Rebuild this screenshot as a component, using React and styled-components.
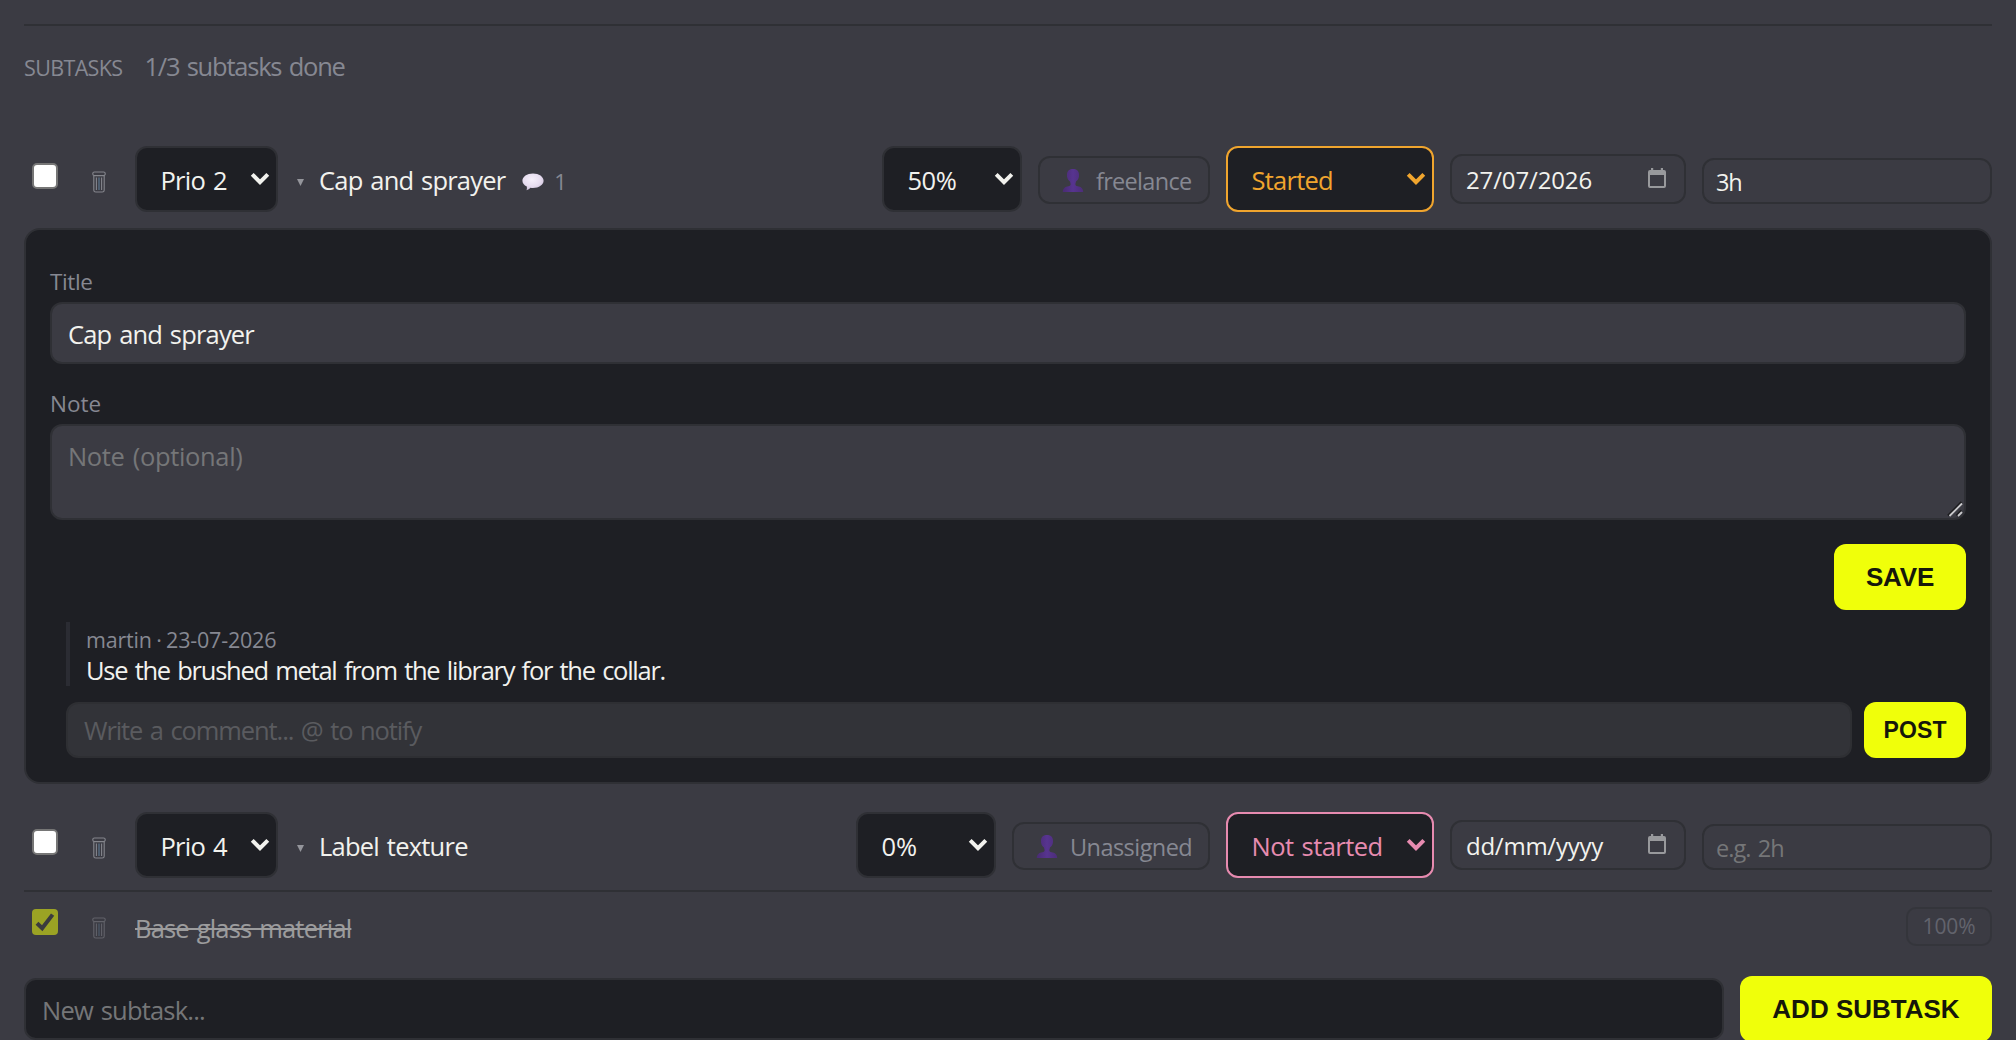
import React from 'react'
import styled, { createGlobalStyle, ThemeProvider } from 'styled-components'

const theme = {
  bg: '#3b3b43',
  dark: '#1e1f24',
  border: '#2f3035',
  text: '#f2f2ee',
  muted: '#868892',
  placeholder: '#757678',
  accent: '#f0ff0a',
  started: '#f0a52e',
  notStarted: '#e78bb0'
}

const GlobalStyle = createGlobalStyle`
  * {
    box-sizing: border-box;
  }

  body {
    margin: 0;
    overflow: hidden;
    background: ${theme.bg};
  }
`

const Page = styled.main`
  height: 1040px;
  padding: 24px 24px 0;
  overflow: hidden;
  background: ${props => props.theme.bg};
  color: ${props => props.theme.text};
  font-family: 'Open Sans', 'Noto Sans', sans-serif;
  font-size: 25.5px;
  line-height: 36px;
  white-space: nowrap;
  word-spacing: 2px;
`

const Header = styled.header`
  display: flex;
  align-items: baseline;
  gap: 22px;
  height: 122px;
  padding-top: 22px;
  border-top: 2px solid ${props => props.theme.border};
  color: ${props => props.theme.muted};
`

const Heading = styled.h2`
  margin: 0;
  font-size: 21.5px;
  font-weight: 400;
  letter-spacing: -0.64px;
`

const Progress = styled.span`
  letter-spacing: -1.22px;
`

const Row = styled.div`
  display: flex;
  align-items: flex-start;
  height: 66px;
`

const Check = styled.span`
  display: flex;
  flex-shrink: 0;
  width: 26px;
  height: 26px;
  margin: 17px 34px 0 8px;
  border: 2px solid #767676;
  border-radius: 5px;
  background: white;

  &.done {
    border: 0;
    border-radius: 4px;
    background: ${props => props.theme.accent};
  }
`

const TrashButton = styled.span`
  display: flex;
  flex-shrink: 0;
  width: 14px;
  height: 22px;
  margin: 25px 29px 0 0;
`

const Select = styled.div`
  display: flex;
  flex-shrink: 0;
  align-items: center;
  justify-content: space-between;
  width: ${props => props.$width}px;
  height: 66px;
  padding: 2px 6px 0 23.5px;
  border: 2px solid ${props => props.$color || props.theme.border};
  border-radius: 12px;
  background: ${props => props.theme.dark};
  color: ${props => props.$color || props.theme.text};
  letter-spacing: ${props => props.$spacing}px;

  svg {
    margin-top: -3px;
  }
`

const Name = styled.div`
  display: flex;
  flex-grow: 1;
  align-items: center;
  height: 66px;
  padding: 2px 0 0 19px;
  letter-spacing: ${props => props.$spacing}px;

  .arrow {
    margin: 5px 15px 0 0;
  }

  .bubble {
    margin: 3px 10px 0 17px;
  }
`

const Count = styled.span`
  padding-top: 1px;
  font-size: 22px;
  color: ${props => props.theme.muted};
`

const Controls = styled.div`
  display: flex;
  gap: 16px;
`

const Assignee = styled.div`
  display: flex;
  align-items: center;
  gap: 12px;
  width: ${props => props.$width}px;
  height: 48px;
  margin-top: 10px;
  padding: 2px 0 0 22px;
  border: 2px solid ${props => props.theme.border};
  border-radius: 12px;
  color: ${props => props.theme.muted};
  font-size: 23.5px;
  letter-spacing: ${props => props.$spacing}px;
`

const DateField = styled.div`
  display: flex;
  align-items: center;
  justify-content: space-between;
  width: 236px;
  height: 50px;
  margin-top: 8px;
  padding: 1px 18px 0 14px;
  border: 2px solid ${props => props.theme.border};
  border-radius: 12px;
  font-size: 24px;
  letter-spacing: ${props => props.$spacing}px;

  svg {
    margin-top: -3px;
  }
`

const Estimate = styled.div`
  display: flex;
  align-items: center;
  width: 290px;
  height: 46px;
  margin-top: 12px;
  padding: 1px 12px 0;
  border: 2px solid ${props => props.theme.border};
  border-radius: 12px;
  color: ${props => props.$empty ? props.theme.placeholder : props.theme.text};
  font-size: 23.5px;
  letter-spacing: ${props => props.$spacing}px;
`

const Panel = styled.section`
  height: 556px;
  margin: 16px 0 28px;
  padding: 37px 24px 0;
  border: 2px solid ${props => props.theme.border};
  border-radius: 16px;
  background: ${props => props.theme.dark};
`

const Label = styled.div`
  height: 35px;
  line-height: 30px;
  font-size: 22.5px;
  color: ${props => props.theme.muted};
  letter-spacing: ${props => props.$spacing}px;
`

const TitleField = styled.div`
  height: 62px;
  margin-bottom: 25px;
  padding: 12px 16px 0;
  border: 2px solid ${props => props.theme.border};
  border-radius: 12px;
  background: ${props => props.theme.bg};
  letter-spacing: -0.83px;
`

const NoteField = styled.div`
  display: flex;
  justify-content: space-between;
  height: 96px;
  margin-bottom: 24px;
  padding: 12px 0 0 16px;
  border: 2px solid ${props => props.theme.border};
  border-radius: 12px;
  background: ${props => props.theme.bg};
  color: ${props => props.theme.placeholder};
  letter-spacing: -0.35px;

  svg {
    align-self: flex-end;
  }
`

const Button = styled.button`
  display: block;
  flex-shrink: 0;
  width: ${props => props.$width}px;
  height: ${props => props.$small ? 56 : 66}px;
  padding: 0;
  border: 0;
  border-radius: 12px;
  background: ${props => props.theme.accent};
  color: #16170a;
  font-family: 'Liberation Sans', Arial, sans-serif;
  font-size: ${props => props.$small ? 23 : 26}px;
  font-weight: bold;
  letter-spacing: ${props => props.$spacing || 0}px;
`

const Actions = styled.div`
  display: flex;
  justify-content: flex-end;
  margin-bottom: 12px;
`

const Comment = styled.div`
  height: 64px;
  margin: 0 0 16px 16px;
  padding: 2px 0 0 16px;
  border-left: 4px solid #2b2c33;
  line-height: 32px;
  letter-spacing: -1.26px;
`

const Meta = styled.div`
  height: 30px;
  font-size: 21.5px;
  color: ${props => props.theme.muted};
  letter-spacing: -0.19px;
  word-spacing: -1px;
`

const CommentForm = styled.div`
  display: flex;
  gap: 12px;
  margin-left: 16px;
`

const CommentField = styled.div`
  flex-grow: 1;
  height: 56px;
  padding: 8px 16px 0;
  border: 2px solid #2e2f33;
  border-radius: 12px;
  background: #323338;
  color: #5a5b5f;
  letter-spacing: -1.1px;
`

const DoneRow = styled.div`
  display: flex;
  align-items: flex-start;
  height: 86px;
  margin-top: 12px;
  border-top: 2px solid ${props => props.theme.border};

  & > * {
    opacity: 0.53;
  }
`

const DoneTitle = styled.span`
  flex-grow: 1;
  padding-top: 18px;
  letter-spacing: -0.81px;

  s {
    text-decoration-thickness: 2px;
  }
`

const Percent = styled.span`
  width: 86px;
  height: 39px;
  margin-top: 15px;
  border: 2px solid ${props => props.theme.border};
  border-radius: 10px;
  color: ${props => props.theme.muted};
  font-size: 21px;
  line-height: 35px;
  text-align: center;
  letter-spacing: -0.14px;
`

const NewSubtask = styled.div`
  display: flex;
  align-items: center;
  gap: 16px;
`

const NewField = styled.div`
  flex-grow: 1;
  height: 62px;
  padding: 12px 16px 0;
  border: 2px solid ${props => props.theme.border};
  border-radius: 12px;
  background: ${props => props.theme.dark};
  color: ${props => props.theme.placeholder};
  letter-spacing: -0.8px;
`

const Chevron = () => (
  <svg width="20" height="14" viewBox="0 0 20 14" fill="none" stroke="currentColor" strokeWidth="4">
    <path d="M2.2 2.4 10 10.2l7.8-7.8" />
  </svg>
)

const Trash = () => (
  <TrashButton>
    <svg width="14" height="22" viewBox="0 0 14 22" fill="none" stroke="#85868d" strokeWidth="1.1">
      <rect x="0.8" y="1" width="12.4" height="3.6" rx="1.6" />
      <path d="M1.8 4.8v14.4q0 1.8 2 1.8h6.4q2 0 2-1.8V4.8" />
      <path d="M4.4 6.5v12.6M9.6 6.5v12.6" />
      <path d="M7 6.5v12.6" stroke="#5f7d96" />
    </svg>
  </TrashButton>
)

const Bubble = () => (
  <svg className="bubble" width="22" height="18" viewBox="0 0 22 18">
    <defs>
      <radialGradient id="bubble" cx="0.45" cy="0.35" r="0.7">
        <stop offset="0" stopColor="#f6f0fb" />
        <stop offset="0.6" stopColor="#e6dcef" />
        <stop offset="1" stopColor="#c9bcd6" />
      </radialGradient>
    </defs>
    <path d="M11 .6c6 0 10.600 3.200 10.600 7.200S17 15 11 15c-.9 0-1.700-.1-2.500-.2-1 1.100-2.300 2-4 2.400.5-1.100.6-2.500.3-3.700C2.100 12.300.4 10.200.4 7.800.4 3.800 5 .6 11 .6z" fill="url(#bubble)" />
  </svg>
)

const Person = () => (
  <svg width="22" height="26" viewBox="0 0 22 26">
    <defs>
      <linearGradient id="person" x1="0" y1="0" x2="1" y2="0">
        <stop offset="0" stopColor="#492b72" />
        <stop offset="0.5" stopColor="#573490" />
        <stop offset="1" stopColor="#4c2d78" />
      </linearGradient>
    </defs>
    <path d="M0.800 24c0-3.800 2.400-5.200 5.600-5.800 1.600-.3 2.200-.8 2.200-2.200L8 13.400C5.400 11.600 4.800 9.200 5 6.200 5.200 2.800 7.600 1 11 1s5.800 1.800 6 5.200c.2 3-.4 5.400-3 7.200l-.6 2.600c0 1.400.6 1.900 2.200 2.200 3.200.6 5.600 2 5.600 5.800z" fill="url(#person)" />
  </svg>
)

const Calendar = () => (
  <svg width="18" height="20" viewBox="0 0 18 20" fill="#98999c">
    <path d="M3 0h2.200v2h7.600V0H15v2h1q2 0 2 2v14q0 2-2 2H2q-2 0-2-2V4q0-2 2-2h1zM2 7v11h14V7z" fillRule="evenodd" />
  </svg>
)

const Grip = () => (
  <svg width="17" height="17" viewBox="0 0 17 17" fill="none">
    <path d="M1 14.500 14.500 1M9.500 14.500l5-5" stroke="#1b1b1e" strokeWidth="2" />
    <path d="M2.500 15 15 2.500M11 15l4-4" stroke="#c9c9cc" strokeWidth="1.800" />
  </svg>
)

const Arrow = () => (
  <svg className="arrow" width="7" height="7" viewBox="0 0 7 7" fill="#94959b">
    <path d="M0 0h7L3.500 7z" />
  </svg>
)

const subtasks = [
  {
    prio: 'Prio 2', title: 'Cap and sprayer', titleSpacing: -0.8, comments: 1,
    percent: '50%', percentSpacing: -0.5,
    assignee: 'freelance', assigneeWidth: 172, assigneeSpacing: -0.7,
    status: 'Started', statusColor: theme.started, statusSpacing: -0.75,
    date: '27/07/2026', dateSpacing: -0.14, estimate: '3h'
  },
  {
    prio: 'Prio 4', title: 'Label texture', titleSpacing: -0.77,
    percent: '0%', percentSpacing: 0,
    assignee: 'Unassigned', assigneeWidth: 198, assigneeSpacing: -0.55,
    status: 'Not started', statusColor: theme.notStarted, statusSpacing: -0.55,
    date: 'dd/mm/yyyy', dateSpacing: -0.25
  }
]

const Subtask = ({ task }) => (
  <Row>
    <Check />
    <Trash />
    <Select $width={143} $spacing={-0.75}>{task.prio}<Chevron /></Select>
    <Name $spacing={task.titleSpacing}>
      <Arrow />
      {task.title}
      {task.comments && <><Bubble /><Count>{task.comments}</Count></>}
    </Name>
    <Controls>
      <Select $width={140} $spacing={task.percentSpacing}>{task.percent}<Chevron /></Select>
      <Assignee $width={task.assigneeWidth} $spacing={task.assigneeSpacing}>
        <Person />
        {task.assignee}
      </Assignee>
      <Select $width={208} $color={task.statusColor} $spacing={task.statusSpacing}>
        {task.status}<Chevron />
      </Select>
      <DateField $spacing={task.dateSpacing}>{task.date}<Calendar /></DateField>
      <Estimate $empty={!task.estimate} $spacing={task.estimate ? -1.2 : -0.95}>
        {task.estimate || 'e.g. 2h'}
      </Estimate>
    </Controls>
  </Row>
)

const App = () => (
  <ThemeProvider theme={theme}>
    <GlobalStyle />
    <Page>
      <Header>
        <Heading>SUBTASKS</Heading>
        <Progress>1/3 subtasks done</Progress>
      </Header>

      <Subtask task={subtasks[0]} />

      <Panel>
        <Label $spacing={-0.4}>Title</Label>
        <TitleField>Cap and sprayer</TitleField>
        <Label $spacing={0}>Note</Label>
        <NoteField>Note (optional)<Grip /></NoteField>
        <Actions>
          <Button $width={132} $spacing={-0.2}>SAVE</Button>
        </Actions>
        <Comment>
          <Meta>martin · 23-07-2026</Meta>
          Use the brushed metal from the library for the collar.
        </Comment>
        <CommentForm>
          <CommentField>Write a comment... @ to notify</CommentField>
          <Button $small $width={102} $spacing={0.14}>POST</Button>
        </CommentForm>
      </Panel>

      <Subtask task={subtasks[1]} />

      <DoneRow>
        <Check className="done">
          <svg width="26" height="26" viewBox="0 0 26 26" fill="none" stroke="#3b3b3b" strokeWidth="4">
            <path d="M5 14.200 10.200 19.300 20.600 5.600" />
          </svg>
        </Check>
        <Trash />
        <DoneTitle><s>Base glass material</s></DoneTitle>
        <Percent>100%</Percent>
      </DoneRow>

      <NewSubtask>
        <NewField>New subtask...</NewField>
        <Button $width={252}>ADD SUBTASK</Button>
      </NewSubtask>
    </Page>
  </ThemeProvider>
)

export default App
